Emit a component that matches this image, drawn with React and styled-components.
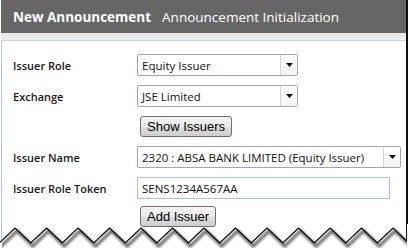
import React from "react";
import styled, { createGlobalStyle } from "styled-components";

const Global = createGlobalStyle`
  html, body { margin: 0; padding: 0; background: #ffffff; }
  body { font-family: "Open Sans", "Noto Sans", sans-serif; }
`;

const Frame = styled.div`
  position: relative;
  width: 411px;
  height: 248px;
  overflow: hidden;
  background: #ffffff;
`;

const Window = styled.div`
  margin-left: 1px;
  width: 405px;
  height: 248px;
  border-right: 2px solid #111;
  display: flex;
  flex-direction: column;
  background: #ffffff;
`;

const Header = styled.div`
  height: 33px;
  background: #666666;
  display: flex;
  align-items: center;
  gap: 11px;
  padding-left: 12px;
  color: #ffffff;
  font-size: 13.5px;
  white-space: nowrap;
`;

const Title = styled.span`
  font-weight: ${(p) => (p.$bold ? 700 : 400)};
`;

const SubBar = styled.div`
  height: 7px;
  background: linear-gradient(#e6e6e6, #eeeeee);
  border-bottom: 1px solid #c9d3dc;
`;

const Content = styled.div`
  flex: 1;
  border-left: 1px solid #b9c6d3;
  padding: 13px 0 0 11px;
  display: grid;
  grid-template-columns: 124px auto;
  grid-auto-rows: min-content;
  row-gap: 9px;
  align-items: center;
`;

const Label = styled.div`
  font-size: 11px;
  font-weight: 600;
  color: #1a1a1a;
  white-space: nowrap;
`;

const Field = styled.div`
  grid-column: 2;
  display: flex;
  margin-top: ${(p) => p.$shift || 0}px;
`;

const SelectBox = styled.div`
  width: ${(p) => p.$w}px;
  height: 22px;
  box-sizing: border-box;
  border: 1px solid #a6a6a6;
  border-radius: 2px;
  display: flex;
  align-items: stretch;
  background: #fff;
  font-size: 11.5px;
  color: #111;
`;

const SelectText = styled.div`
  flex: 1;
  display: flex;
  align-items: center;
  padding-left: 4px;
  white-space: nowrap;
  overflow: hidden;
`;

const Arrow = styled.div`
  width: 16px;
  border-left: 1px solid #d4d4d4;
  display: flex;
  align-items: center;
  justify-content: center;
  background: linear-gradient(#ffffff, #f3f3f3);
`;

const TextInput = styled.div`
  width: 253px;
  height: 22px;
  box-sizing: border-box;
  border: 1px solid #a8c4e0;
  display: flex;
  align-items: center;
  padding-left: 4px;
  font-size: 11.5px;
  color: #111;
`;

const Button = styled.div`
  margin-left: 3px;
  height: 21px;
  box-sizing: border-box;
  padding: 0 6px;
  border: 1px solid #707070;
  border-radius: 3px;
  background: linear-gradient(#f4f4f4 0%, #ebebeb 50%, #dddddd 51%, #cfcfcf 100%);
  display: flex;
  align-items: center;
  font-family: "Liberation Sans", Arial, sans-serif;
  font-size: 13px;
  color: #000;
  white-space: nowrap;
`;

const Torn = styled.svg`
  position: absolute;
  left: 0;
  bottom: 0;
  width: 411px;
  height: 24px;
`;

function Caret() {
  return (
    <svg width="7" height="4" viewBox="0 0 7 4">
      <path d="M0 0 H7 L3.5 4 Z" fill="#111" />
    </svg>
  );
}

function Select({ w, children }) {
  return (
    <SelectBox $w={w}>
      <SelectText>{children}</SelectText>
      <Arrow>
        <Caret />
      </Arrow>
    </SelectBox>
  );
}

function TornEdge() {
  const period = 31.5;
  const top = 4;
  const bottom = 19;
  const pts = [];
  let x = 15 - period;
  pts.push([x, top]);
  while (x < 430) {
    pts.push([x + period / 2, bottom]);
    pts.push([x + period, top]);
    x += period;
  }
  const line = pts.map((p) => p.join(",")).join(" ");
  const fill = `${line} 440,24 -20,24`;
  return (
    <Torn viewBox="0 0 411 24">
      <defs>
        <filter id="blur" x="-10%" y="-50%" width="120%" height="200%">
          <feGaussianBlur stdDeviation="1.3" />
        </filter>
        <clipPath id="clip">
          <rect x="0" y="0" width="407" height="24" />
        </clipPath>
      </defs>
      <polygon points={fill} fill="#ffffff" />
      <polyline
        points={line}
        transform="translate(2,3)"
        fill="none"
        stroke="#7a7a7a"
        strokeWidth="3.5"
        filter="url(#blur)"
        clipPath="url(#clip)"
      />
      <polyline points={line} fill="none" stroke="#000" strokeWidth="1.2" clipPath="url(#clip)" />
      <rect x="407" y="0" width="4" height="24" fill="#fff" />
    </Torn>
  );
}

export default function App() {
  return (
    <>
      <Global />
      <Frame>
        <Window>
          <Header>
            <Title $bold>New Announcement</Title>
            <Title>Announcement Initialization</Title>
          </Header>
          <SubBar />
          <Content>
            <Label>Issuer Role</Label>
            <Field>
              <Select w={161}>Equity Issuer</Select>
            </Field>
            <Label>Exchange</Label>
            <Field>
              <Select w={161}>JSE Limited</Select>
            </Field>
            <Field>
              <Button>Show Issuers</Button>
            </Field>
            <Label>Issuer Name</Label>
            <Field>
              <Select w={264}>2320 : ABSA BANK LIMITED (Equity Issuer)</Select>
            </Field>
            <Label>Issuer Role Token</Label>
            <Field>
              <TextInput>SENS1234A567AA</TextInput>
            </Field>
            <Field $shift={-2}>
              <Button>Add Issuer</Button>
            </Field>
          </Content>
        </Window>
        <TornEdge />
      </Frame>
    </>
  );
}
